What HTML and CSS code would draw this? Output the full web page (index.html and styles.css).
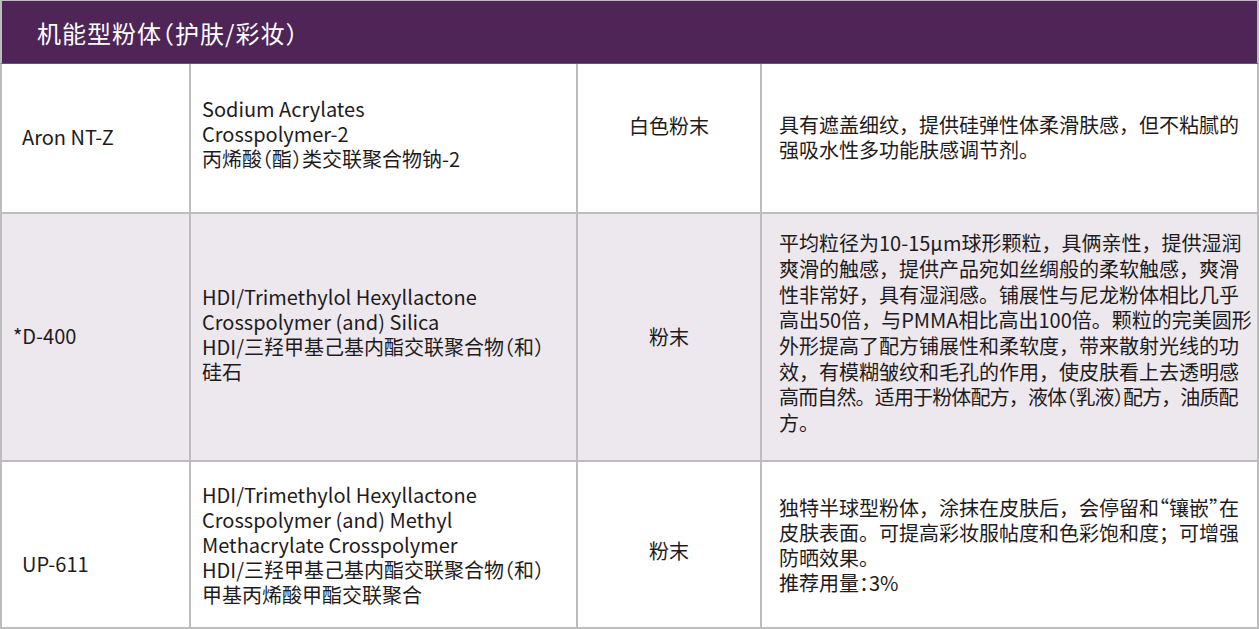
FILE: index.html
```html
<!DOCTYPE html>
<html lang="zh">
<head>
<meta charset="utf-8">
<title>机能型粉体</title>
<link rel="stylesheet" href="styles.css">
</head>
<body>
<div class="sheet">
  <div class="title-bar"><h1 class="title">机能型粉体<span class="hw">（</span>护肤/彩妆<span class="hw">）</span></h1></div>
  <div class="grid">
    <div class="cell name up-2"><p class="txt">Aron NT-Z</p></div>
    <div class="cell inci up-5"><p class="txt">Sodium Acrylates<br>Crosspolymer-2<br>丙烯酸<span class="hw">（</span>酯<span class="hw">）</span>类交联聚合物钠-2</p></div>
    <div class="cell form up-13"><p class="txt">白色粉末</p></div>
    <div class="cell desc up-1"><p class="txt">具有遮盖细纹，提供硅弹性体柔滑肤感，但不粘腻的<br>强吸水性多功能肤感调节剂。</p></div>

    <div class="cell name name-star alt up-2"><p class="txt">*D-400</p></div>
    <div class="cell inci alt up-3"><p class="txt">HDI/Trimethylol Hexyllactone<br>Crosspolymer (and) Silica<br>HDI/三羟甲基己基内酯交联聚合物<span class="hw">（</span>和<span class="hw">）</span><br>硅石</p></div>
    <div class="cell form alt up-1"><p class="txt">粉末</p></div>
    <div class="cell desc desc-loose alt up-4"><p class="txt">平均粒径为10-15μm球形颗粒，具俩亲性，提供湿润<br>爽滑的触感，提供产品宛如丝绸般的柔软触感，爽滑<br>性非常好，具有湿润感。铺展性与尼龙粉体相比几乎<br>高出50倍，与PMMA相比高出100倍。颗粒的完美圆形<br>外形提高了配方铺展性和柔软度，带来散射光线的功<br>效，有模糊皱纹和毛孔的作用，使皮肤看上去透明感<br><span class="tight">高而自然。适用于粉体配方，液体<span class="hw">（</span>乳液<span class="hw">）</span>配方，油质配</span><br>方。</p></div>

    <div class="cell name down-19"><p class="txt">UP-611</p></div>
    <div class="cell inci"><p class="txt">HDI/Trimethylol Hexyllactone<br>Crosspolymer (and) Methyl<br>Methacrylate Crosspolymer<br>HDI/三羟甲基己基内酯交联聚合物<span class="hw">（</span>和<span class="hw">）</span><br>甲基丙烯酸甲酯交联聚合</p></div>
    <div class="cell form down-6"><p class="txt">粉末</p></div>
    <div class="cell desc"><p class="txt">独特半球型粉体，涂抹在皮肤后，会停留和<span class="hw">“</span>镶嵌<span class="hw">”</span>在<br>皮肤表面。可提高彩妆服帖度和色彩饱和度；可增强<br>防晒效果。<br>推荐用量<span class="hw">：</span>3%</p></div>
  </div>
</div>
</body>
</html>
```

FILE: styles.css
```css
* { box-sizing: border-box; }
html, body { margin: 0; padding: 0; background: #ffffff; }
body {
  font-family: "Noto Sans CJK SC", "Noto Sans", sans-serif;
  color: #1f1b1c;
}
.sheet {
  width: 1259px;
  height: 629px;
  overflow: hidden;
}
.title-bar {
  height: 64px;
  background: #4f2456;
  border-top: 1px solid #bdbdbd;
  border-left: 2px solid #bdbdbd;
  border-right: 2px solid #bdbdbd;
  border-bottom: 1px solid #3d5e8e;
  display: flex;
  align-items: center;
  padding-left: 35px;
}
.title {
  margin: 0;
  font-size: 24px;
  font-weight: 400;
  color: #ffffff;
  letter-spacing: 1px;
}
.hw { font-feature-settings: "halt" 1; }
.tight { letter-spacing: -0.85px; }
.grid {
  display: grid;
  grid-template-columns: 187px 385px 182px 495px;
  grid-template-rows: 148px 246px 165px;
  gap: 2px;
  background: #bdbdbd;
  padding: 0 2px 2px 2px;
}
.cell {
  background: #ffffff;
  display: flex;
  align-items: center;
  font-size: 20px;
  line-height: 25px;
  white-space: nowrap;
}
.txt { margin: 0; }
.cell.alt { background: #ece8ee; }
.name { padding-left: 20px; }
.name-star { padding-left: 11px; }
.inci { padding-left: 11px; }
.form { justify-content: center; }
.desc { padding-left: 17px; }
.desc-loose { line-height: 25.7px; }

/* vertical offsets of the centred content */
.up-1 { padding-bottom: 2px; }
.up-2 { padding-bottom: 4px; }
.up-3 { padding-bottom: 6px; }
.up-4 { padding-bottom: 8px; }
.up-5 { padding-bottom: 10px; }
.up-13 { padding-bottom: 26px; }
.down-6 { padding-top: 12px; }
.down-19 { padding-top: 38px; }
```
